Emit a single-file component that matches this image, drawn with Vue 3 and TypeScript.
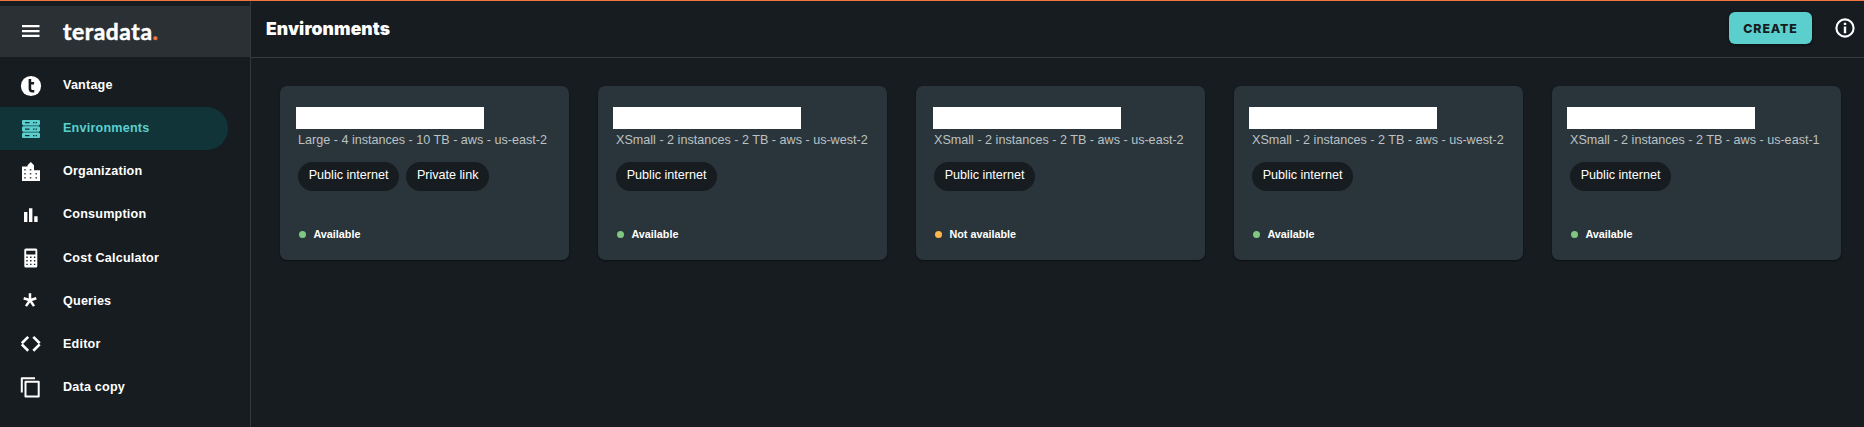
<script setup lang="ts">
interface NavItem { label: string; icon: string; active?: boolean }
interface Environment { size: string; chips: string[]; available: boolean; shift: number }

const nav: NavItem[] = [
  { label: 'Vantage', icon: 'vantage' },
  { label: 'Environments', icon: 'servers', active: true },
  { label: 'Organization', icon: 'building' },
  { label: 'Consumption', icon: 'bars' },
  { label: 'Cost Calculator', icon: 'calculator' },
  { label: 'Queries', icon: 'asterisk' },
  { label: 'Editor', icon: 'code' },
  { label: 'Data copy', icon: 'copy' },
]

const environments: Environment[] = [
  { size: 'Large - 4 instances - 10 TB - aws - us-east-2', chips: ['Public internet', 'Private link'], available: true, shift: -2 },
  { size: 'XSmall - 2 instances - 2 TB - aws - us-west-2', chips: ['Public internet'], available: true, shift: -3 },
  { size: 'XSmall - 2 instances - 2 TB - aws - us-east-2', chips: ['Public internet'], available: false, shift: -1 },
  { size: 'XSmall - 2 instances - 2 TB - aws - us-west-2', chips: ['Public internet'], available: true, shift: -3 },
  { size: 'XSmall - 2 instances - 2 TB - aws - us-east-1', chips: ['Public internet'], available: true, shift: -3 },
]
</script>

<template>
  <div class="app">
    <aside class="sidebar">
      <div class="brand">
        <svg class="menu" viewBox="0 0 18 12"><path d="M0 0h17.5v2.3H0zM0 4.9h17.5v2.3H0zM0 9.7h17.5V12H0z" fill="currentColor" /></svg>
        <span class="logo">teradata<i>.</i></span>
      </div>
      <nav>
        <a v-for="item in nav" :key="item.label" class="item" :class="{ active: item.active }">
          <svg class="icon" viewBox="0 0 22 22" fill="currentColor">
            <template v-if="item.icon === 'vantage'">
              <circle cx="11" cy="11" r="10.1" />
              <path d="M9.9 4v9.6q0 2.6 2.4 2.6h2M9.9 8.3h4.2" fill="none" stroke="#171c20" stroke-width="2.6" />
            </template>
            <template v-else-if="item.icon === 'servers'">
              <path d="M3 2h16v18H3z" opacity=".55" />
              <rect x="2" y="2" width="18" height="5" rx="1" />
              <rect x="2" y="8.5" width="18" height="5" rx="1" />
              <rect x="2" y="15" width="18" height="5" rx="1" />
              <path d="M5 4h4.5v1.3H5zM13 4h1.5v1.3H13zM15.6 4H17v1.3h-1.4zM5 10.4h4.5v1.3H5zM13 10.4h1.5v1.3H13zM15.6 10.4H17v1.3h-1.4zM5 16.9h4.5v1.3H5zM13 16.9h1.5v1.3H13zM15.6 16.9H17v1.3h-1.4z" fill="#113438" />
            </template>
            <template v-else-if="item.icon === 'building'">
              <path d="M2 5.5h5.5V4.3L10.8 1 14 4.3v4.9h6V20H2z" />
              <path d="M4.2 8h1.5v1.5H4.2zM9.8 8h1.5v1.5H9.8zM4.2 12h1.5v1.5H4.2zM9.8 12h1.5v1.5H9.8zM15.5 12H17v1.5h-1.5zM4.2 16h1.5v1.5H4.2zM9.8 16h1.5v1.5H9.8zM15.5 16H17v1.5h-1.5z" fill="#171c20" opacity=".8" />
            </template>
            <path v-else-if="item.icon === 'bars'" d="M4 8h3.4v10H4zM9 4.2h3.4V18H9zM14.2 12.2h3.4V18h-3.4z" />
            <template v-else-if="item.icon === 'calculator'">
              <rect x="4.3" y="1.6" width="13" height="18.8" rx="1.5" />
              <path d="M6.2 3.8h9.2v3.6H6.2zM6.3 9.5h1.4v1.4H6.3zM10.1 9.5h1.4v1.4h-1.4zM13.9 9.5h1.4v1.4h-1.4zM6.3 13.1h1.4v1.4H6.3zM10.1 13.1h1.4v1.4h-1.4zM13.9 13.1h1.4v1.4h-1.4zM6.3 16.7h1.4v1.4H6.3zM10.1 16.7h1.4v1.4h-1.4zM13.9 16.7h1.4v1.4h-1.4z" fill="#171c20" />
            </template>
            <path v-else-if="item.icon === 'asterisk'" d="M10 3.2v7M10 10.2L3.7 8.2M10 10.2l6.3-2M10 10.2l-4 5.9M10 10.2l4 5.9" fill="none" stroke="currentColor" stroke-width="2.5" />
            <path v-else-if="item.icon === 'code'" d="M8.2 3.9L1.8 10.2M1.8 11.4l6.4 6.3M13.3 3.9l6.4 6.3M19.7 11.4l-6.4 6.3" fill="none" stroke="currentColor" stroke-width="2.7" />
            <path v-else d="M1.8 15.6V1.2h13.2M5.5 4.8h13.2v14.8H5.5z" fill="none" stroke="currentColor" stroke-width="2" stroke-linejoin="round" />
          </svg>
          <span>{{ item.label }}</span>
        </a>
      </nav>
    </aside>
    <main>
      <header>
        <h1>Environments</h1>
        <button type="button">CREATE</button>
        <svg class="info" viewBox="0 0 20 20"><circle cx="10" cy="10" r="8.6" fill="none" stroke="#fff" stroke-width="2.1" /><path d="M8.8 4.8h2.4v2.2H8.8zM8.8 8.6h2.4v6.6H8.8z" fill="#fff" /></svg>
      </header>
      <section class="cards">
        <article v-for="(env, n) in environments" :key="n" class="card">
          <div class="name" :style="{ marginLeft: env.shift + 'px' }"></div>
          <p class="size">{{ env.size }}</p>
          <div class="chips"><span v-for="chip in env.chips" :key="chip" class="chip">{{ chip }}</span></div>
          <div class="status" :class="{ down: !env.available }"><b></b>{{ env.available ? 'Available' : 'Not available' }}</div>
        </article>
      </section>
    </main>
  </div>
</template>

<style>
body { margin: 0; background: #171c20; overflow: hidden; }
</style>

<style scoped>
* { box-sizing: border-box; }
.app { display: flex; height: 427px; overflow: hidden; border-top: 1px solid #f37440; background: #171c20; color: #fff; font-family: "Liberation Sans", Arial, sans-serif; font-size: 12.6px; }
.sidebar { width: 251px; flex: none; border-right: 1px solid #33383c; padding-top: 5px; }
.brand { height: 51px; background: #2b3034; display: flex; align-items: center; padding: 0 0 1px 22px; }
.menu { width: 18px; height: 12px; margin-right: 23px; }
.logo { font: 700 22.8px/28px Lato, sans-serif; letter-spacing: .58px; -webkit-text-stroke: .5px; }
.logo i { color: #f37440; font-style: normal; }
nav { padding-top: 7px; }
.item { display: flex; align-items: center; height: 43.15px; width: 228px; padding-left: 20px; border-radius: 0 22px 22px 0; font-weight: 700; letter-spacing: .2px; }
.item span { padding-bottom: 1px; }
.item.active { background: #113438; color: #5acfcd; }
.icon { width: 22px; height: 22px; margin-right: 21px; }
main { flex: 1; }
header { display: flex; align-items: center; height: 57px; border-bottom: 1px solid #33383c; padding: 0 9px 2px 15px; }
h1 { margin: 0; flex: 1; padding-top: 1px; font: 900 17.5px/24px Inter, sans-serif; letter-spacing: .1px; }
button { width: 83px; height: 32px; border: 0; border-radius: 6px; padding: 0; background: #5acfcd; color: #171c20; font: 800 12.4px Inter, sans-serif; letter-spacing: .85px; box-shadow: 0 1px 3px #0008; }
.info { width: 20px; height: 20px; margin-left: 23px; }
.cards { display: grid; grid-template-columns: repeat(5, 289px); gap: 29px; padding: 28px 0 0 29px; }
.card { height: 174px; border-radius: 7px; background: #29353b; padding: 21px 18px 0; box-shadow: 0 1px 2px #0007; }
.name { width: 188px; height: 22px; background: #fff; }
.size { margin: 3px 0 0; line-height: 16px; color: #bdc1c3; white-space: nowrap; }
.chips { display: flex; gap: 7px; margin-top: 14px; }
.chip { height: 29px; line-height: 27px; padding: 0 10.7px; border-radius: 15px; background: #171c20; }
.status { display: flex; align-items: center; margin-top: 35px; height: 16px; font-size: 10.8px; font-weight: 700; }
.status b { width: 7px; height: 7px; border-radius: 50%; background: #81c784; margin: 1px 7.4px 0 1px; }
.down b { background: #ffb74d; }
</style>
